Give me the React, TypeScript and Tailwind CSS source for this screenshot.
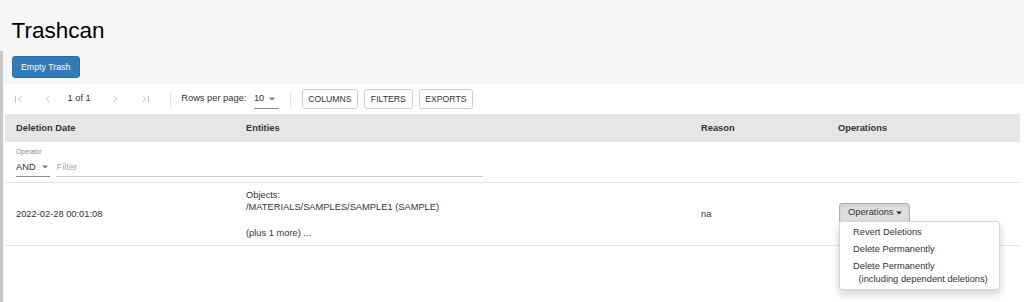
import React from "react";

const Caret = ({ className = "" }: { className?: string }) => (
  <svg width="6" height="4" viewBox="0 0 6 4" className={className}>
    <path d="M0 0.5h6L3 3.5z" fill="currentColor" />
  </svg>
);

export default function App() {
  return (
    <div className="flex min-h-[302px] bg-[#f6f6f6] font-['Liberation_Sans',Arial,sans-serif] text-[#333]">
      <div className="w-[3px] shrink-0 mt-[51px] bg-[#c6c6c6]" />
      <div className="flex-1 flex flex-col min-w-0">
        <div className="pl-[8.5px] pt-[19px] text-[22.5px] leading-[23px] text-black">Trashcan</div>
        <div className="pl-[8.5px] mt-[14px] flex">
          <button className="h-[22px] px-[8.5px] bg-[#337ab7] border border-[#2e6da4] rounded-[3px] text-white text-[8.8px] leading-none">
            Empty Trash
          </button>
        </div>
        <div className="mt-[6px] ml-[1px] bg-white flex-1 flex flex-col">
          {/* toolbar */}
          <div className="h-[30px] flex items-center text-[9.3px]">
            <svg width="10" height="10" viewBox="0 0 10 10" className="ml-[10px] text-[#c2c2c2]">
              <path d="M1.5 1.5v7M7.5 1.8L4.3 5l3.2 3.2" stroke="currentColor" strokeWidth="1" fill="none" />
            </svg>
            <svg width="6" height="10" viewBox="0 0 6 10" className="ml-[21px] text-[#c2c2c2]">
              <path d="M4.5 1.8L1.3 5l3.2 3.2" stroke="currentColor" strokeWidth="1" fill="none" />
            </svg>
            <span className="ml-[16.5px]">1 of 1</span>
            <svg width="6" height="10" viewBox="0 0 6 10" className="ml-[21px] text-[#c2c2c2]">
              <path d="M1.5 1.8L4.7 5L1.5 8.2" stroke="currentColor" strokeWidth="1" fill="none" />
            </svg>
            <svg width="10" height="10" viewBox="0 0 10 10" className="ml-[22px] text-[#c2c2c2]">
              <path d="M8.5 1.5v7M2.5 1.8L5.7 5L2.5 8.2" stroke="currentColor" strokeWidth="1" fill="none" />
            </svg>
            <div className="ml-[20px] w-px h-[15px] bg-[#e2e2e2]" />
            <span className="ml-[10.5px]">Rows per page:</span>
            <div className="ml-[7.5px] w-[25px] h-[19px] border-b border-[#8a8a8a] flex items-center">
              <span>10</span>
              <Caret className="ml-[5px] text-[#777]" />
            </div>
            <div className="ml-[11px] w-px h-[15px] bg-[#e2e2e2]" />
            <button className="ml-[11px] w-[56px] h-[20px] border border-[#cfcfcf] rounded-[3px] text-[8.7px] leading-none">COLUMNS</button>
            <button className="ml-[6px] w-[49px] h-[20px] border border-[#cfcfcf] rounded-[3px] text-[8.7px] leading-none">FILTERS</button>
            <button className="ml-[6px] w-[54px] h-[20px] border border-[#cfcfcf] rounded-[3px] text-[8.7px] leading-none">EXPORTS</button>
          </div>

          {/* table */}
          <div className="ml-[1px] w-[1015px] text-[9.3px] leading-[12.7px]">
            <div className="grid grid-cols-[230px_455px_137px_193px] h-[28px] bg-[#e6e6e6] font-bold items-center">
              <div className="pl-[11px]">Deletion Date</div>
              <div className="pl-[11px]">Entities</div>
              <div className="pl-[11px]">Reason</div>
              <div className="pl-[11px]">Operations</div>
            </div>
            <div className="h-[41px] border-b border-[#e4e4e4] pl-[11px] pt-[6px] flex flex-col">
              <div className="text-[6.5px] leading-[8px] text-[#8a8a8a]">Operator</div>
              <div className="mt-[2px] flex">
                <div className="w-[34px] h-[19px] border-b border-[#8a8a8a] flex items-center">
                  <span>AND</span>
                  <Caret className="ml-[6px] text-[#777]" />
                </div>
                <div className="ml-[6px] w-[427px] h-[19px] border-b border-[#cdcdcd] flex items-center text-[#aaa]">
                  <span className="pl-[0.5px]">Filter</span>
                </div>
              </div>
            </div>
            <div className="grid grid-cols-[230px_455px_137px_193px] h-[63px] border-b border-[#e4e4e4]">
              <div className="pl-[11px] flex items-center">2022-02-28 00:01:08</div>
              <div className="pl-[11px] pt-[5.5px]">
                <div>Objects:</div>
                <div>/MATERIALS/SAMPLES/SAMPLE1 (SAMPLE)</div>
                <div>&nbsp;</div>
                <div>(plus 1 more) ...</div>
              </div>
              <div className="pl-[11px] flex items-center">na</div>
              <div className="pl-[11.5px] pt-[20px]">
                <div className="relative inline-block">
                  <button className="h-[19px] pl-[8.5px] pr-[7px] bg-[#e0e0e0] border border-[#adadad] rounded-t-[3px] flex items-center shadow-[inset_0_2px_4px_rgba(0,0,0,0.08)]">
                    <span>Operations</span>
                    <Caret className="ml-[3px] text-[#333]" />
                  </button>
                  <div className="absolute left-0 top-[18px] z-10 w-[161px] bg-white border border-[#d6d6d6] rounded-[3px] shadow-[0_4px_8px_rgba(0,0,0,0.18)] py-[2px]">
                    <div className="px-[13.5px] py-[2.15px] whitespace-nowrap">Revert Deletions</div>
                    <div className="px-[13.5px] py-[2.15px] whitespace-nowrap">Delete Permanently</div>
                    <div className="px-[13.5px] py-[2px] whitespace-nowrap">
                      <div>Delete Permanently</div>
                      <div className="pl-[5.5px]">(including dependent deletions)</div>
                    </div>
                  </div>
                </div>
              </div>
            </div>
          </div>
        </div>
      </div>
    </div>
  );
}
